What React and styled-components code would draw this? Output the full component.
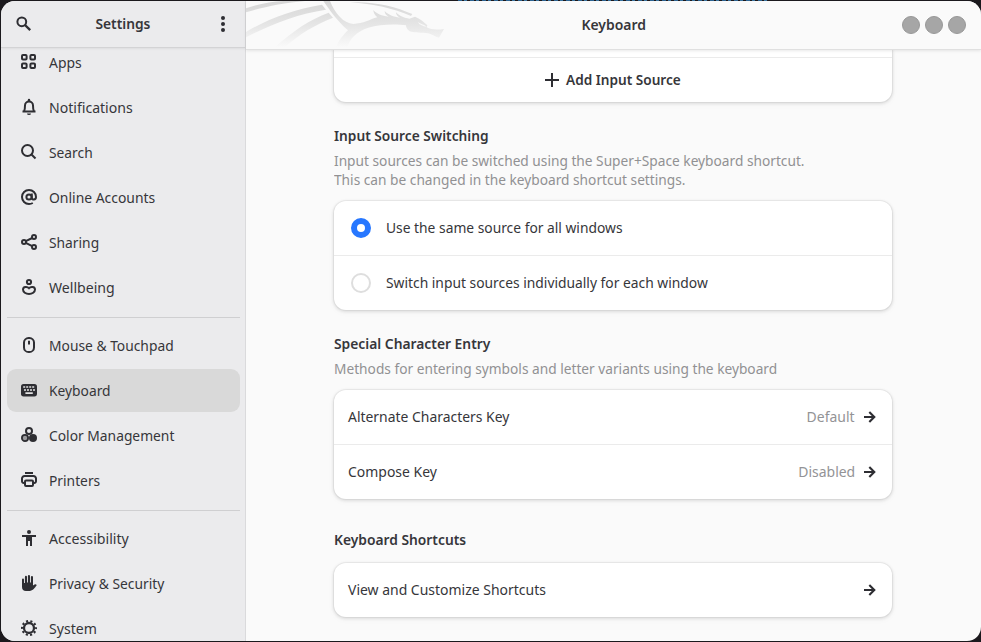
import React from "react";
import styled, { createGlobalStyle } from "styled-components";

const GlobalStyle = createGlobalStyle`
  * { box-sizing: border-box; }
  html, body { margin: 0; height: 100%; overflow: hidden; background: #1b191d; }
`;

const Desktop = styled.div`
  width: 981px;
  height: 642px;
  padding: 1px 0 1px 1px;
  overflow: hidden;
  background:
    repeating-linear-gradient(90deg, #2c6391 0 4px, #1b191d 4px 6px, #39739f 6px 9px, #1b191d 9px 12px) 458px 0 / 310px 1px no-repeat,
    #1b191d;
  font-family: "Noto Sans", "Open Sans", sans-serif;
  font-size: 15px;
  color: #36363a;
`;

const Window = styled.div`
  display: grid;
  grid-template-columns: 245px 1fr;
  width: 980px;
  height: 640px;
  border-radius: 14px;
  overflow: hidden;
  background: #fafafa;
`;

const Sidebar = styled.aside`
  display: flex;
  flex-direction: column;
  min-height: 0;
  height: 640px;
  background: #ebebed;
  border-right: 1px solid #dadadc;
`;

const SideHeader = styled.header`
  flex: 0 0 47px;
  display: grid;
  grid-template-columns: 46px 1fr 46px;
  align-items: center;
  justify-items: center;
  border-bottom: 1px solid #d3d3d5;
  box-shadow: 0 1px 2px rgba(0, 0, 0, 0.06);
`;

const Text = styled.span`
  display: inline-block;
  white-space: nowrap;
  transform: translateY(-1px) scaleX(${(p) => p.$fit || 0.93});
  transform-origin: ${(p) => p.$origin || "left"} center;
  line-height: 20px;
`;

const BoldText = styled(Text)`
  font-weight: 600;
`;

const HintText = styled(Text)`
  line-height: 19px;
  transform: scaleX(${(p) => p.$fit});
`;

const NavViewport = styled.div`
  flex: 1;
  min-height: 0;
  overflow: hidden;
`;

const Nav = styled.nav`
  display: flex;
  flex-direction: column;
  gap: 2px;
  margin: -7px 5px 0 6px;
`;

const NavRow = styled.div`
  flex: 0 0 43px;
  height: 43px;
  display: flex;
  align-items: center;
  gap: 12px;
  padding-left: 14px;
  border-radius: 9px;
  background: ${(p) => (p.$active ? "#d9d9d9" : "transparent")};
`;

const Separator = styled.div`
  height: 1px;
  margin: 6px 0 4px;
  background: #cfcfd1;
`;

const NavIcon = styled.svg`
  flex: none;
  width: 16px;
  height: 16px;
  margin-top: -1px;
  overflow: visible;
`;

const PlainIcon = styled.svg`
  flex: none;
  width: 16px;
  height: 16px;
  overflow: visible;
`;

const Content = styled.main`
  display: flex;
  flex-direction: column;
  min-width: 0;
  height: 640px;
`;

const ContentHeader = styled.header`
  position: relative;
  z-index: 1;
  flex: 0 0 49px;
  display: grid;
  grid-template-columns: 1fr auto 1fr;
  align-items: center;
  background: #fafafa;
  border-bottom: 1px solid #e0e0e0;
  box-shadow: 0 1px 3px rgba(0, 0, 0, 0.09);
`;

const Dragon = styled.svg`
  display: block;
  width: 240px;
  height: 48px;
`;

const Controls = styled.div`
  display: flex;
  justify-content: flex-end;
  gap: 5px;
  padding-right: 15px;
`;

const Control = styled.span`
  width: 18px;
  height: 18px;
  border-radius: 50%;
  background: #a6a6a6;
  border: 1px solid #989898;
`;

const Page = styled.div`
  width: 558px;
  margin-left: 88px;
`;

const Card = styled.section`
  border-radius: ${(p) => (p.$clipped ? "0 0 12px 12px" : "12px")};
  background: #fff;
  box-shadow: 0 0 0 1px rgba(0, 0, 0, 0.04), 0 1px 3px 1px rgba(0, 0, 0, 0.09), 0 2px 6px 1px rgba(0, 0, 0, 0.03);
`;

const Row = styled.div`
  display: flex;
  align-items: center;
  height: 54px;
  padding: 0 14px;
  & + & {
    height: 55px;
    border-top: 1px solid #ebebeb;
  }
`;

const ClippedRow = styled.div`
  height: 7px;
`;

const AddRow = styled.div`
  display: flex;
  align-items: center;
  justify-content: center;
  gap: 6px;
  height: 45px;
  padding-left: 11px;
  border-top: 1px solid #ebebeb;
`;

const RowValue = styled.div`
  display: flex;
  align-items: center;
  gap: 7px;
  margin-left: auto;
  color: #939396;
`;

const SectionTitle = styled.h2`
  margin: ${(p) => p.$top}px 0 ${(p) => p.$bottom}px;
  font-size: 15px;
  line-height: 20px;
  height: 20px;
`;

const Hint = styled.p`
  display: flex;
  flex-direction: column;
  margin: 0 0 12px;
  color: #919193;
`;

const Radio = styled.span`
  width: 20px;
  height: 20px;
  margin: 0 15px 0 3px;
  border-radius: 50%;
  background: #fff;
  border: ${(p) => (p.$on ? "6px solid #2777ff" : "2px solid #dedede")};
`;

const ink = "#2e2e33";
const line = { fill: "none", stroke: ink, strokeWidth: 2 };

const icons = {
  apps: (
    <g {...line}>
      <rect x="1" y="1" width="4.6" height="4.6" rx="1" />
      <rect x="9.4" y="1" width="4.6" height="4.6" rx="1" />
      <rect x="1" y="9.4" width="4.6" height="4.6" rx="1" />
      <rect x="9.4" y="9.4" width="4.6" height="4.6" rx="1" />
    </g>
  ),
  bell: (
    <g>
      <path d="M3 12.4C4 11 4 9.5 4 6.6a4 4 0 0 1 8 0c0 2.9 0 4.4 1 5.8M1.5 12.5h13" {...line} />
      <path d="M6.8 2.5V1a1.2 1.2 0 0 1 2.4 0v1.5zM6 14.5h4a2 1.5 0 0 1-4 0z" fill={ink} />
    </g>
  ),
  search: (
    <g {...line}>
      <circle cx="6.5" cy="6.5" r="5.5" />
      <path d="M10.5 10.5l4 4" />
    </g>
  ),
  at: (
    <g {...line}>
      <circle cx="8" cy="8" r="2.6" />
      <path d="M10.8 4.6v4.2c0 2.4 4.2 2.5 4.2-.8a7 7 0 1 0-7 7c1.6 0 2.6-.3 3.8-1" />
    </g>
  ),
  share: (
    <g {...line}>
      <circle cx="13" cy="3" r="2" />
      <circle cx="3" cy="8" r="2" />
      <circle cx="13" cy="13" r="2" />
      <path d="M11.2 4L4.8 7.2M4.8 8.9l6.4 3.2" />
    </g>
  ),
  wellbeing: (
    <g {...line}>
      <circle cx="8" cy="3" r="2.1" />
      <path d="M8 9.2C6.600 7.600 2 7.200 2 10.600 2 13 4.800 15 8 15s6-2 6-4.400C14 7.200 9.400 7.600 8 9.200z" />
    </g>
  ),
  mouse: (
    <g {...line}>
      <rect x="3" y="1" width="10" height="14" rx="4.600" />
      <path d="M8 3.800v3.600" />
    </g>
  ),
  keyboard: (
    <g>
      <rect x="0" y="2" width="16" height="12.400" rx="2.600" fill={ink} />
      <path d="M2.200 5h2m1 0h2m1 0h2m1 0h2M3 8h2m1 0h2m1 0h2m1 0h2M4.400 11.200h7.400" fill="none" stroke="#e2e2e2" strokeWidth="1.700" />
    </g>
  ),
  color: (
    <g>
      <circle cx="8" cy="4" r="3" {...line} />
      <circle cx="4" cy="11" r="3.100" fill="#9a9a9d" stroke={ink} strokeWidth="1.800" />
      <circle cx="12" cy="11" r="4" fill={ink} />
    </g>
  ),
  printer: (
    <g {...line}>
      <path d="M4 1h8M4 11H2.800A1.800 1.800 0 0 1 1 9.200V6.600A2.600 2.600 0 0 1 3.600 4h8.800A2.600 2.600 0 0 1 15 6.600v2.600A1.800 1.800 0 0 1 13.200 11H12" />
      <rect x="4" y="8.400" width="8" height="5.600" rx="1" />
    </g>
  ),
  person: (
    <path
      fill={ink}
      d="M8 0a2 2 0 1 1 0 4 2 2 0 0 1 0-4zM1 5h14v1.900h-4V16H9v-5H7v5H5V6.900H1z"
    />
  ),
  hand: (
    <path
      fill={ink}
      d="M1 4.500a1 1 0 0 1 2 0V8h.9V1.900a1 1 0 0 1 2.100 0V7.500h.9V1a1 1 0 0 1 2.100 0v6.500h.9V2a1 1 0 0 1 2.100 0v8.500l1.600-1.100c1.100-.7 2.600.3 1.900 1.200C14 12.500 12 16 8.500 16H5c-2.500 0-4-1.500-4-4z"
    />
  ),
  gear: (
    <g {...line}>
      <circle cx="8" cy="8" r="5" strokeWidth="2.300" />
      <circle cx="8" cy="8" r="7" strokeDasharray="2.100 2.298" strokeDashoffset="1.050" />
    </g>
  ),
};

const nav = [
  ["apps", "Apps", 0.93],
  ["bell", "Notifications", 0.938],
  ["search", "Search", 0.92],
  ["at", "Online Accounts", 0.927],
  ["share", "Sharing", 0.92],
  ["wellbeing", "Wellbeing", 0.94],
  null,
  ["mouse", "Mouse & Touchpad", 0.921],
  ["keyboard", "Keyboard", 0.92],
  ["color", "Color Management", 0.921],
  ["printer", "Printers", 0.92],
  null,
  ["person", "Accessibility", 0.943],
  ["hand", "Privacy & Security", 0.922],
  ["gear", "System", 0.94],
];

const Arrow = () => (
  <PlainIcon viewBox="0 0 16 16">
    <path d="M2 8h10.500M7.300 3l5 5-5 5" {...line} strokeWidth="2.100" />
  </PlainIcon>
);

const LinkRow = ({ label, fit, value, valueFit }) => (
  <Row>
    <Text $fit={fit}>{label}</Text>
    <RowValue>
      {value && <Text $fit={valueFit} $origin="right">{value}</Text>}
      <Arrow />
    </RowValue>
  </Row>
);

export default function App() {
  return (
    <Desktop>
      <GlobalStyle />
      <Window>
        <Sidebar>
          <SideHeader>
            <PlainIcon viewBox="0 0 16 16">
              <circle cx="5.800" cy="5.800" r="4.400" {...line} />
              <path d="M9 9l5.200 5.200" {...line} strokeWidth="2.400" />
            </PlainIcon>
            <BoldText $fit={0.92} $origin="center">Settings</BoldText>
            <PlainIcon viewBox="-1 0 16 16">
              <circle cx="8" cy="2" r="2" fill={ink} />
              <circle cx="8" cy="8" r="2" fill={ink} />
              <circle cx="8" cy="14" r="2" fill={ink} />
            </PlainIcon>
          </SideHeader>
          <NavViewport>
            <Nav>
              {nav.map((item, i) =>
                item ? (
                  <NavRow key={item[1]} $active={item[0] === "keyboard"}>
                    <NavIcon viewBox="0 0 16 16">{icons[item[0]]}</NavIcon>
                    <Text $fit={item[2]}>{item[1]}</Text>
                  </NavRow>
                ) : (
                  <Separator key={i} />
                )
              )}
            </Nav>
          </NavViewport>
        </Sidebar>

        <Content>
          <ContentHeader>
            <Dragon viewBox="18 3 720 144">
              <defs>
                <linearGradient id="fade" gradientUnits="userSpaceOnUse" x1="0" y1="3" x2="0" y2="142">
                  <stop offset="0" stopColor="#d6d6d6" />
                  <stop offset="0.500" stopColor="#e5e5e5" />
                  <stop offset="1" stopColor="#fafafa" />
                </linearGradient>
              </defs>
              <g fill="url(#fade)">
                <path d="M18 25C55 12 95 5 130 3H195C130 9 65 22 18 37z" />
                <path d="M18 96C80 58 160 28 246 14L258 29C170 42 90 75 18 112z" />
                <path d="M104 142C160 92 210 58 266 38L279 53C225 75 180 100 134 142z" />
                <path d="M250 3H270C285 40 310 70 340 72C370 71 390 58 412 52C405 46 400 38 400 30C410 42 425 47 446 50C438 46 434 40 434 33C445 45 460 50 480 53C472 49 468 43 468 37C480 50 495 54 508 56L525 50C540 56 552 66 562 76L560 82C572 89 590 90 612 87L597 113C580 107 570 98 550 98C530 98 515 97 508 93C500 88 498 80 498 76C470 72 420 72 385 83C350 95 330 115 322 142H288C296 120 312 103 324 91C290 62 268 28 250 3z" />
                <path d="M330 7C400 3 465 19 517 42L513 48C460 25 400 12 330 7z" />
              </g>
              <path d="M533 66C539 75 548 79 560 80C552 74 542 72 533 66z" fill="#f8f8f8" />
            </Dragon>
            <BoldText $fit={0.93} $origin="center">Keyboard</BoldText>
            <Controls>
              <Control />
              <Control />
              <Control />
            </Controls>
          </ContentHeader>

          <Page>
            <Card $clipped>
              <ClippedRow />
              <AddRow>
                <PlainIcon viewBox="0 0 16 16">
                  <path d="M1 8h14M8 1v14" {...line} />
                </PlainIcon>
                <BoldText $fit={0.908}>Add Input Source</BoldText>
              </AddRow>
            </Card>

            <SectionTitle $top={24} $bottom={5}>
              <BoldText $fit={0.915}>Input Source Switching</BoldText>
            </SectionTitle>
            <Hint>
              <HintText $fit={0.914}>Input sources can be switched using the Super+Space keyboard shortcut.</HintText>
              <HintText $fit={0.914}>This can be changed in the keyboard shortcut settings.</HintText>
            </Hint>
            <Card>
              <Row>
                <Radio $on />
                <Text $fit={0.921}>Use the same source for all windows</Text>
              </Row>
              <Row>
                <Radio />
                <Text $fit={0.922}>Switch input sources individually for each window</Text>
              </Row>
            </Card>

            <SectionTitle $top={24} $bottom={5}>
              <BoldText $fit={0.922}>Special Character Entry</BoldText>
            </SectionTitle>
            <Hint>
              <HintText $fit={0.914}>Methods for entering symbols and letter variants using the keyboard</HintText>
            </Hint>
            <Card>
              <LinkRow label="Alternate Characters Key" fit={0.928} value="Default" valueFit={0.93} />
              <LinkRow label="Compose Key" fit={0.93} value="Disabled" valueFit={0.93} />
            </Card>

            <SectionTitle $top={31} $bottom={13}>
              <BoldText $fit={0.92}>Keyboard Shortcuts</BoldText>
            </SectionTitle>
            <Card>
              <LinkRow label="View and Customize Shortcuts" fit={0.931} />
            </Card>
          </Page>
        </Content>
      </Window>
    </Desktop>
  );
}
